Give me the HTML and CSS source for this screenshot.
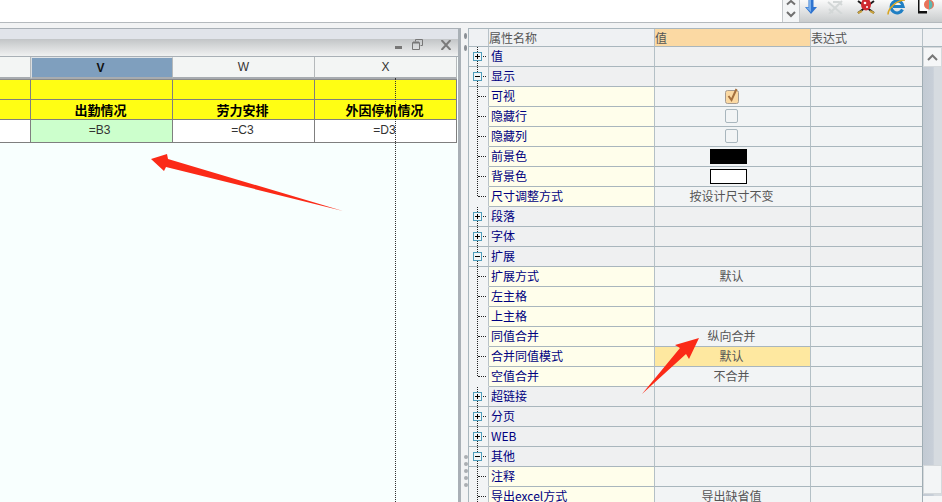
FILE: index.html
```html
<!DOCTYPE html>
<html lang="zh">
<head>
<meta charset="utf-8">
<title>属性</title>
<link rel="stylesheet" href="styles.css">
</head>
<body>
<div class="app">
  <header class="topbar">
    <div class="input"></div>
    <div class="spin">
      <svg width="16" height="22" viewBox="0 0 16 22"><path d="M4 4.500l4-3.500 4 3.500M4 12l4 4 4-4" fill="none" stroke="#707070" stroke-width="2"/></svg>
    </div>
    <div class="tools">
      <svg class="tool t-arrow" width="12" height="14" viewBox="0 0 12 14"><path d="M3.500 0h5v7H12l-6 7-6-7h3.500z" fill="#2f74d0"/><path d="M4 0h2v12L1 7.500h3z" fill="#79aeea"/></svg>
      <svg class="tool" width="19" height="14" viewBox="0 0 19 14"><path d="M2 2l14 12M16 1L3 14M7 2h6l3 3M3 9l4 4" fill="none" stroke="#d3d7d7" stroke-width="2"/></svg>
      <svg class="tool" width="18" height="14" viewBox="0 0 18 14"><path d="M1 1l16 12M17 1L1 13" stroke="#1c1c1c" stroke-width="2"/><path d="M1 13l4-2M17 13l-4-2" stroke="#c9a23c" stroke-width="2"/><ellipse cx="9" cy="4.500" rx="5" ry="6" fill="#cf2a30"/><circle cx="8" cy="3" r="1.300" fill="#fff"/><circle cx="10" cy="7" r="1" fill="#fff"/></svg>
      <svg class="tool" width="19" height="15" viewBox="0 0 19 15"><path d="M15.500 9.500A6 6 0 1 1 15 3.500L16 6.500H6" fill="none" stroke="#1f7fc4" stroke-width="3"/><path d="M1 14.500C1 8 10 0 18 0" fill="none" stroke="#d9a520" stroke-width="1.500"/></svg>
      <svg class="tool" width="17" height="14" viewBox="0 0 17 14"><path d="M0 0h10v11H0z" fill="#fff"/><path d="M0 0h1.500v13H9v-1H0z" fill="#111"/><path d="M0 11h9v2.500H0z" fill="#111"/><circle cx="11" cy="4.500" r="5" fill="#e8735a"/><path d="M11 4.500V0a5 5 0 0 1 0 9.500z" fill="#5cb8b0"/></svg>
    </div>
  </header>

  <main class="main">
    <section class="designer">
      <div class="strip"></div>
      <div class="titlebar">
        <span class="win-min"></span>
        <svg class="win-restore" width="11" height="11" viewBox="0 0 11 11"><path d="M3.500 2.500V.5h7v6h-2M.5 3.500h7v7h-7z" fill="none" stroke="#777"/><path d="M1 3.500h6" stroke="#777" stroke-width="2"/></svg>
        <svg class="win-close" width="10" height="10" viewBox="0 0 10 10"><path d="M.5 0l9 10M9.500 0l-9 10" stroke="#7a7a7a" stroke-width="2"/></svg>
      </div>
      <div class="sheet">
        <div class="sheet-grid">
          <div class="col-head"></div>
          <div class="col-head selected">V</div>
          <div class="col-head">W</div>
          <div class="col-head">X</div>

          <div class="band gap-top"></div>
          <div class="band gap-top"></div>
          <div class="band gap-top"></div>
          <div class="band gap-top"></div>

          <div class="band"></div>
          <div class="band title">出勤情况</div>
          <div class="band title">劳力安排</div>
          <div class="band title">外因停机情况</div>

          <div class="data"></div>
          <div class="data current">=B3</div>
          <div class="data">=C3</div>
          <div class="data">=D3</div>
        </div>
      </div>
      <div class="pagebreak"></div>
      <svg class="arrow-left" width="195" height="60" viewBox="0 0 195 60"><path d="M0 5L16 0 17 5 192 57 15 13 13 17z" fill="#fb2a17"/></svg>
    </section>

    <div class="splitter">
      <div class="grip"><i class="nub"></i><i class="nub"></i></div>
      <div class="dots"><i></i><i></i><i></i><i></i><i></i></div>
    </div>

    <section class="props">
      <div class="prop-table">
        <div class="ph"></div><div class="ph">属性名称</div><div class="ph active">值</div><div class="ph">表达式</div><div class="ph corner"></div>

        <div class="t group"><span class="box plus"></span></div><div class="n g">值</div><div class="v g"></div><div class="e g"></div>
        <div class="scroll">
          <div class="sb-up"><svg width="11" height="7" viewBox="0 0 11 7"><path d="M1 6l4.500-4.500L10 6" fill="none" stroke="#777" stroke-width="2"/></svg></div>
          <div class="sb-thumb"></div>
          <div class="sb-down"></div>
        </div>

        <div class="t group"><span class="box"></span></div><div class="n g">显示</div><div class="v g"></div><div class="e g"></div>
        <div class="t leaf"></div><div class="n">可视</div>
        <div class="v"><svg width="14" height="16" viewBox="0 0 14 16"><rect x=".5" y="2.500" width="13" height="13" rx="2" fill="#fbd9a3" stroke="#a59b92"/><path d="M3.500 8l3 4 5-11" fill="none" stroke="#a5703f" stroke-width="2"/></svg></div><div class="e"></div>
        <div class="t leaf"></div><div class="n">隐藏行</div><div class="v"><span class="check"></span></div><div class="e"></div>
        <div class="t leaf"></div><div class="n">隐藏列</div><div class="v"><span class="check"></span></div><div class="e"></div>
        <div class="t leaf"></div><div class="n">前景色</div><div class="v"><span class="swatch black"></span></div><div class="e"></div>
        <div class="t leaf"></div><div class="n">背景色</div><div class="v"><span class="swatch white"></span></div><div class="e"></div>
        <div class="t leaf end"></div><div class="n">尺寸调整方式</div><div class="v">按设计尺寸不变</div><div class="e"></div>
        <div class="t group"><span class="box plus"></span></div><div class="n g">段落</div><div class="v g"></div><div class="e g"></div>
        <div class="t group"><span class="box plus"></span></div><div class="n g">字体</div><div class="v g"></div><div class="e g"></div>
        <div class="t group"><span class="box"></span></div><div class="n g">扩展</div><div class="v g"></div><div class="e g"></div>
        <div class="t leaf"></div><div class="n">扩展方式</div><div class="v">默认</div><div class="e"></div>
        <div class="t leaf"></div><div class="n">左主格</div><div class="v"></div><div class="e"></div>
        <div class="t leaf"></div><div class="n">上主格</div><div class="v"></div><div class="e"></div>
        <div class="t leaf"></div><div class="n">同值合并</div><div class="v">纵向合并</div><div class="e"></div>
        <div class="t leaf"></div><div class="n">合并同值模式</div><div class="v picked">默认</div><div class="e"></div>
        <div class="t leaf end"></div><div class="n">空值合并</div><div class="v">不合并</div><div class="e"></div>
        <div class="t group"><span class="box plus"></span></div><div class="n g">超链接</div><div class="v g"></div><div class="e g"></div>
        <div class="t group"><span class="box plus"></span></div><div class="n g">分页</div><div class="v g"></div><div class="e g"></div>
        <div class="t group"><span class="box plus"></span></div><div class="n g">WEB</div><div class="v g"></div><div class="e g"></div>
        <div class="t group"><span class="box"></span></div><div class="n g">其他</div><div class="v g"></div><div class="e g"></div>
        <div class="t leaf"></div><div class="n">注释</div><div class="v"></div><div class="e"></div>
        <div class="t leaf"></div><div class="n">导出excel方式</div><div class="v">导出缺省值</div><div class="e"></div>
      </div>
      <svg class="arrow-up" width="58" height="56" viewBox="0 0 58 56"><path d="M57 0L47 21 44 16 0 56 38 10 33 7z" fill="#fb2a17"/></svg>
    </section>
  </main>
</div>
</body>
</html>
```

FILE: styles.css
```css
* { box-sizing: border-box; }
html, body { margin: 0; height: 100%; overflow: hidden; }
body { font: 12px "Noto Sans CJK SC", "Liberation Sans", sans-serif; background: #f0f0f0; }
.app { width: 942px; height: 502px; display: flex; flex-direction: column; overflow: hidden; }

.topbar { height: 23px; flex: none; display: flex; border-bottom: 1px solid #b4b9bd; }
.input { width: 782px; background: #fff; }
.spin { width: 18px; background: #f3f5f6; border: 1px solid #c4c8cb; border-width: 0 1px; display: flex; }
.tools { flex: 1; display: flex; gap: 12px; padding-left: 5px; background: linear-gradient(#fafafa, #c9cccd); }
.tool { flex: none; }
.t-arrow { margin-right: -3px; }

.main { flex: 1; display: flex; min-height: 0; padding-top: 5px; background: #f2f3f4; }

.designer { position: relative; width: 461px; flex: none; border: solid #a9b0b6; border-width: 1px 3px 0 0; background: #f8fffe; display: flex; flex-direction: column; }
.strip { height: 10px; background: #e1e4ea; }
.titlebar { height: 18px; display: flex; align-items: flex-start; padding: 1px 0 0 395px; background: linear-gradient(#c2c5c7, #f0f1f1); border-bottom: 1px solid #a9b0b6; }
.win-min { width: 7px; height: 3px; margin: 6px 10px 0 0; background: #777; }
.win-restore { margin: -1px 18px 0 0; }
.sheet { flex: 1; }
.sheet-grid { display: grid; grid-template-columns: 31px 142px 142px 142px; grid-template-rows: 22px 21px 20px 23px; width: 457px; }
.col-head { background: #f3f5f4; border-right: 1px solid #b5b9bb; border-bottom: 2px solid #a8acb0; text-align: center; line-height: 20px; font-family: "Liberation Sans", sans-serif; color: #333; font-size: 12px; }
.col-head.selected { background: #7f9fbe; font-weight: 700; color: #111; border-top: 1px solid #e0e4e8; border-left: 1px solid #d9dde0; padding-right: 3px; }
.band { background: #fffe14; border-right: 1px solid #7f7f7f; border-bottom: 1px solid #7f7f7f; }
.gap-top { border-top: 1px solid #8a8a8a; }
.title { text-align: center; font-weight: 700; color: #000; line-height: 19px; font-size: 13px; padding: 0 2px 0 0; }
.data { background: #fff; border-right: 1px solid #7f7f7f; border-bottom: 1px solid #7f7f7f; text-align: center; line-height: 21px; font-family: "Liberation Sans", sans-serif; color: #333; padding-right: 2px; }
.current { background: #ccffcc; padding-right: 4px; }
.pagebreak { position: absolute; left: 395px; top: 49px; bottom: 0; border-left: 1px dotted #333; }
.arrow-left { position: absolute; left: 151px; top: 125px; }

.splitter { width: 7px; flex: none; position: relative; }
.grip { display: flex; flex-direction: column; gap: 6px; padding: 5px 0 0 3px; }
.nub { width: 3px; height: 6px; border-radius: 50%; background: #8b9096; }
.dots { position: absolute; left: 3px; top: 427px; display: flex; flex-direction: column; gap: 3px; }
.dots i { width: 4px; height: 4px; border-radius: 50%; background: #aaaeb2; }

.props { flex: 1; position: relative; min-width: 0; overflow: hidden; }
.prop-table { display: grid; grid-template-columns: 20px 166px 156px 112px 19px; grid-template-rows: 18px repeat(23, 20px); border-top: 1px solid #a9b6bd; border-left: 1px solid #a9b6bd; background: #f2f4f5; }
.ph { background: #eff1f3; border-right: 1px solid #b8c2c8; border-bottom: 1px solid #a9b6bd; color: #555; line-height: 17px; font-size: 12px; overflow: hidden; }
.ph.active { background: #fbd9a3; }
.ph.corner { border-right: 0; }
.t { position: relative; display: flex; align-items: center; justify-content: center; padding: 0 3px 0 0; border-right: 1px solid #b8c2c8; background: #f2f4f5; border-bottom: 1px solid transparent; }
.t.group { border-bottom-color: #a9b6bd; }
.t::before { content: ""; position: absolute; left: 8px; top: 0; bottom: 0; border-left: 1px dotted #222; }
.t::after { content: ""; position: absolute; left: 9px; top: 9px; width: 8px; border-top: 1px dotted #222; }
.t.end::before { bottom: 10px; }
.box { position: relative; z-index: 1; width: 9px; height: 9px; background: #f3f5f6; border: 1px solid #4f9dbb; }
.box::before { content: ""; position: absolute; left: 1px; top: 3px; width: 5px; height: 1px; background: #000; }
.plus::after { content: ""; position: absolute; left: 3px; top: 1px; width: 1px; height: 5px; background: #000; }
.n, .v, .e { border-right: 1px solid #b4c0c6; border-bottom: 1px solid #a9b6bd; line-height: 18px; }
.n { background: #fffeeb; color: #000080; padding-left: 2px; }
.v { background: #f2f4f5; color: #555; text-align: center; display: flex; align-items: center; justify-content: center; padding: 0 2px 1px 0; }
.e { background: #f2f4f5; border-right-color: #a0adb4; }
.g { background: #eff0f1; }
.picked { background: #fee8a0; }
.check { width: 13px; height: 14px; background: #f2f4f5; border: 1px solid #a9b6bd; border-radius: 2px; }
.swatch { width: 37px; height: 15px; border: 1px solid #000; margin-right: 7px; }
.black { background: #000; }
.white { background: #fff; }

.scroll { grid-column: 5; grid-row: 2 / span 23; position: relative; background: linear-gradient(90deg, #c2cad3 0, #c8cfd8 55%, #d6dbe0 56%); }
.sb-up { height: 20px; background: #f5f6f7; border: 1px solid #d5d9dc; display: flex; align-items: center; justify-content: center; }
.sb-thumb { position: absolute; left: 0; right: 0; top: 418px; height: 29px; background: #f3f5f6; border: 1px solid #d5d9dc; }
.sb-down { position: absolute; left: 0; right: 0; top: 449px; height: 12px; background: #f5f6f7; }

.arrow-up { position: absolute; left: 174px; top: 310px; }
```
